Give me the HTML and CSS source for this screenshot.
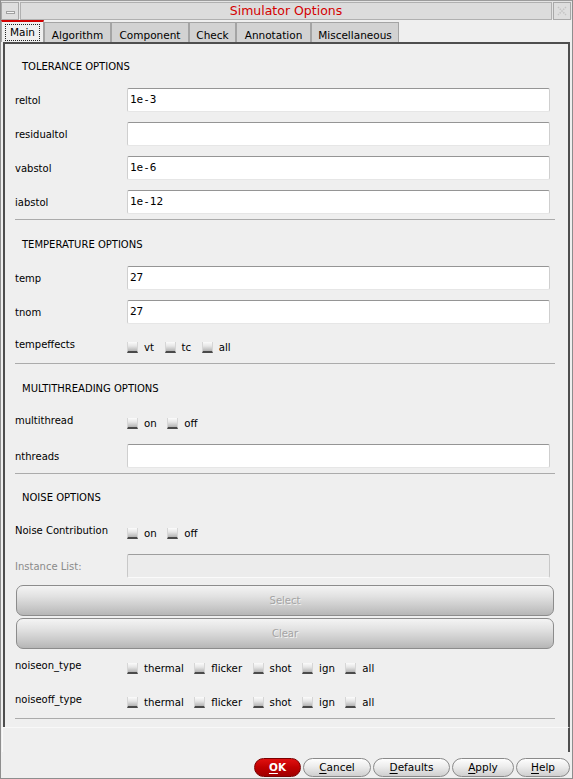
FILE: index.html
```html
<!DOCTYPE html>
<html>
<head>
<meta charset="utf-8">
<link rel="stylesheet" href="styles.css">
</head>
<body>
<div class="window">
  <div class="titlebar">
    <div class="tb-btn tb-min"><span class="dash"></span></div>
    <div class="tb-title">Simulator Options</div>
    <div class="tb-btn tb-close">
      <svg width="12" height="12" viewBox="0 0 12 12"><path d="M2 2 L10 10 M10 2 L2 10" stroke="#c4c4c4" stroke-width="1.5" stroke-dasharray="1.5 1" fill="none"/></svg>
    </div>
  </div>
  <div class="tabs">
    <div class="tab active tab-main"><span class="focus">Main</span></div>
    <div class="tab tab-alg">Algorithm</div>
    <div class="tab tab-comp">Component</div>
    <div class="tab tab-check">Check</div>
    <div class="tab tab-ann">Annotation</div>
    <div class="tab tab-misc">Miscellaneous</div>
  </div>
  <div class="panel">
    <div class="content">
      <div class="head head-first">TOLERANCE OPTIONS</div>
      <div class="row"><span class="lbl">reltol</span><div class="field">1e-3</div></div>
      <div class="row gap"><span class="lbl">residualtol</span><div class="field"></div></div>
      <div class="row gap"><span class="lbl">vabstol</span><div class="field">1e-6</div></div>
      <div class="row gap"><span class="lbl">iabstol</span><div class="field">1e-12</div></div>
      <div class="sep"></div>

      <div class="head">TEMPERATURE OPTIONS</div>
      <div class="row"><span class="lbl">temp</span><div class="field">27</div></div>
      <div class="row gap"><span class="lbl">tnom</span><div class="field">27</div></div>
      <div class="row gap"><span class="lbl lbl-up">tempeffects</span>
        <div class="checks">
          <span class="cb"></span><span class="cbt">vt</span>
          <span class="cb"></span><span class="cbt">tc</span>
          <span class="cb"></span><span class="cbt">all</span>
        </div>
      </div>
      <div class="sep"></div>

      <div class="head">MULTITHREADING OPTIONS</div>
      <div class="row"><span class="lbl lbl-up">multithread</span>
        <div class="checks">
          <span class="cb"></span><span class="cbt">on</span>
          <span class="cb"></span><span class="cbt">off</span>
        </div>
      </div>
      <div class="row gap"><span class="lbl">nthreads</span><div class="field"></div></div>
      <div class="sep"></div>

      <div class="head head-noise">NOISE OPTIONS</div>
      <div class="row"><span class="lbl lbl-up">Noise Contribution</span>
        <div class="checks">
          <span class="cb"></span><span class="cbt">on</span>
          <span class="cb"></span><span class="cbt">off</span>
        </div>
      </div>
      <div class="row gap"><span class="lbl lbl-dis">Instance List:</span><div class="field field-dis"></div></div>
      <div class="bigbtn bigbtn-first">Select</div>
      <div class="bigbtn">Clear</div>
      <div class="row row-noise1"><span class="lbl lbl-up">noiseon_type</span>
        <div class="checks">
          <span class="cb"></span><span class="cbt">thermal</span>
          <span class="cb"></span><span class="cbt">flicker</span>
          <span class="cb"></span><span class="cbt">shot</span>
          <span class="cb"></span><span class="cbt">ign</span>
          <span class="cb"></span><span class="cbt">all</span>
        </div>
      </div>
      <div class="row gap"><span class="lbl lbl-up">noiseoff_type</span>
        <div class="checks">
          <span class="cb"></span><span class="cbt">thermal</span>
          <span class="cb"></span><span class="cbt">flicker</span>
          <span class="cb"></span><span class="cbt">shot</span>
          <span class="cb"></span><span class="cbt">ign</span>
          <span class="cb"></span><span class="cbt">all</span>
        </div>
      </div>
      <div class="sep"></div>
    </div>
  </div>
  <div class="panel-foot"></div>
  <div class="footer">
    <div class="btn btn-ok"><u>O</u>K</div>
    <div class="btn btn-cancel"><u>C</u>ancel</div>
    <div class="btn btn-def"><u>D</u>efaults</div>
    <div class="btn btn-apply"><u>A</u>pply</div>
    <div class="btn btn-help"><u>H</u>elp</div>
  </div>
</div>
</body>
</html>
```

FILE: styles.css
```css
* { box-sizing: border-box; }
html, body {
  margin: 0;
  padding: 0;
  background: #efefef;
}
body {
  font-family: "DejaVu Sans", sans-serif;
  font-size: 10px;
  color: #000;
}
.window {
  width: 573px;
  height: 779px;
  border: 1px solid #8e8e8e;
  border-top: none;
  background: #efefef;
  display: flex;
  flex-direction: column;
  overflow: hidden;
}

/* title bar */
.titlebar {
  height: 19px;
  display: flex;
  gap: 1px;
  padding-top: 1px;
  background: #e4e4e4;
  border-top: 1px solid #9c9c9c;
  flex: none;
}
.tb-btn {
  width: 18px;
  height: 18px;
  border: 1px solid #a8a8a8;
  background: #dedede;
  display: flex;
  align-items: center;
  justify-content: center;
  flex: none;
}
.dash {
  width: 9px;
  height: 3px;
  border: 1px solid #a0a0a0;
  background: #f4f4f4;
  margin-top: 3px;
}
.tb-title {
  flex: 1;
  height: 18px;
  border: 1px solid #b0b0b0;
  background: #dcdcdc;
  color: #d40000;
  font-size: 12.5px;
  line-height: 16px;
  text-align: center;
}
.tb-close { margin-right: 1px; }

/* tabs */
.tabs {
  height: 23px;
  display: flex;
  align-items: flex-end;
  flex: none;
}
.tab {
  height: 20px;
  border: 1px solid #a4a4a4;
  border-bottom: none;
  background: #d2d2d2;
  text-align: center;
  font-size: 10.5px;
  line-height: 20px;
  padding-top: 2px;
  flex: none;
}
.tab-main {
  width: 43px;
  height: 22px;
  background: #efefef;
  border-top: 2px solid #d40000;
  display: flex;
  align-items: center;
  justify-content: center;
  padding-top: 0;
}
.focus {
  display: block;
  border: 1px dotted #222;
  padding: 0 4px;
  line-height: 15px;
  margin-top: 1px;
}
.tab-alg { width: 67px; }
.tab-comp { width: 78px; }
.tab-check { width: 47px; }
.tab-ann { width: 75px; }
.tab-misc { width: 88px; }

/* panel */
.panel {
  margin-left: 2px;
  width: 567px;
  height: 685px;
  border: 2px solid #4e4e4e;
  border-bottom: none;
  flex: none;
  overflow: hidden;
}
.content {
  padding: 0 13px 0 10px;
}
.head {
  padding: 18px 0 14px 7px;
  line-height: 14px;
}
.head-first { padding-top: 16px; }
.head-noise { padding-top: 17px; padding-bottom: 15px; }
.row {
  height: 24px;
  display: flex;
  align-items: center;
}
.row.gap { margin-top: 10px; }
.row-noise1 { margin-top: 6px; }
.lbl {
  width: 112px;
  flex: none;
  white-space: nowrap;
}
.lbl-up { margin-top: -3px; }
.lbl-dis { color: #8a8a8a; }
.field {
  flex: 1;
  height: 24px;
  margin-right: 5px;
  background: #fff;
  border: 1px solid #cfcfcf;
  border-top-color: #959595;
  border-bottom-color: #e6e6e6;
  border-radius: 2px;
  font-family: "DejaVu Sans Mono", monospace;
  font-size: 11px;
  line-height: 22px;
  padding-left: 2px;
}
.field-dis {
  background: #ececec;
  border-color: #c8c8c8;
  border-top-color: #9e9e9e;
  border-bottom-color: #fafafa;
}
.sep {
  height: 1px;
  background: #ababab;
  margin-top: 5px;
}
.checks {
  display: flex;
  align-items: center;
  padding-top: 2px;
}
.cb {
  width: 11px;
  height: 11px;
  background: linear-gradient(#fbfbfb, #e6e6e6 45%, #b4b4b4);
  border-left: 1px solid #d6d6d6;
  border-right: 1px solid #d6d6d6;
  border-bottom: 2px solid #4a4a4a;
  flex: none;
}
.cbt {
  margin-left: 6px;
  margin-right: 10.5px;
  font-size: 10.2px;
}
.bigbtn {
  height: 31px;
  margin-right: 1px;
  margin-left: 1px;
  margin-top: 2px;
  border: 1px solid #8c8c8c;
  border-radius: 7px;
  background: linear-gradient(#f4f4f4, #e2e2e2 35%, #c8c8c8 75%, #b6b6b6);
  color: #a4a4a4;
  text-shadow: 1px 1px 0 #f2f2f2;
  text-align: center;
  line-height: 29px;
}
.bigbtn-first { margin-top: 7px; }

.panel-foot {
  height: 25px;
  margin-left: 1px;
  width: 568px;
  border-left: 1px solid #fafafa;
  border-top: 1px solid #f8f8f8;
  border-right: 2px solid #4e4e4e;
  flex: none;
}

/* footer */
.footer {
  display: flex;
  justify-content: flex-end;
  gap: 2px;
  padding-top: 6px;
  padding-right: 2px;
}
.btn {
  height: 19px;
  border: 1px solid #8a8a8a;
  border-radius: 10px;
  background: linear-gradient(#fefefe, #ececec 45%, #cfcfcf);
  text-align: center;
  line-height: 17px;
  font-size: 10.5px;
}
.btn u { text-decoration-thickness: 1px; text-underline-offset: 2px; }
.btn-ok {
  width: 47px;
  background: linear-gradient(#e01010, #c00000 50%, #a00000);
  border-color: #7a0000;
  color: #fff;
  font-weight: bold;
}
.btn-cancel { width: 68px; }
.btn-def { width: 77px; }
.btn-apply { width: 62px; }
.btn-help { width: 54px; }
```
